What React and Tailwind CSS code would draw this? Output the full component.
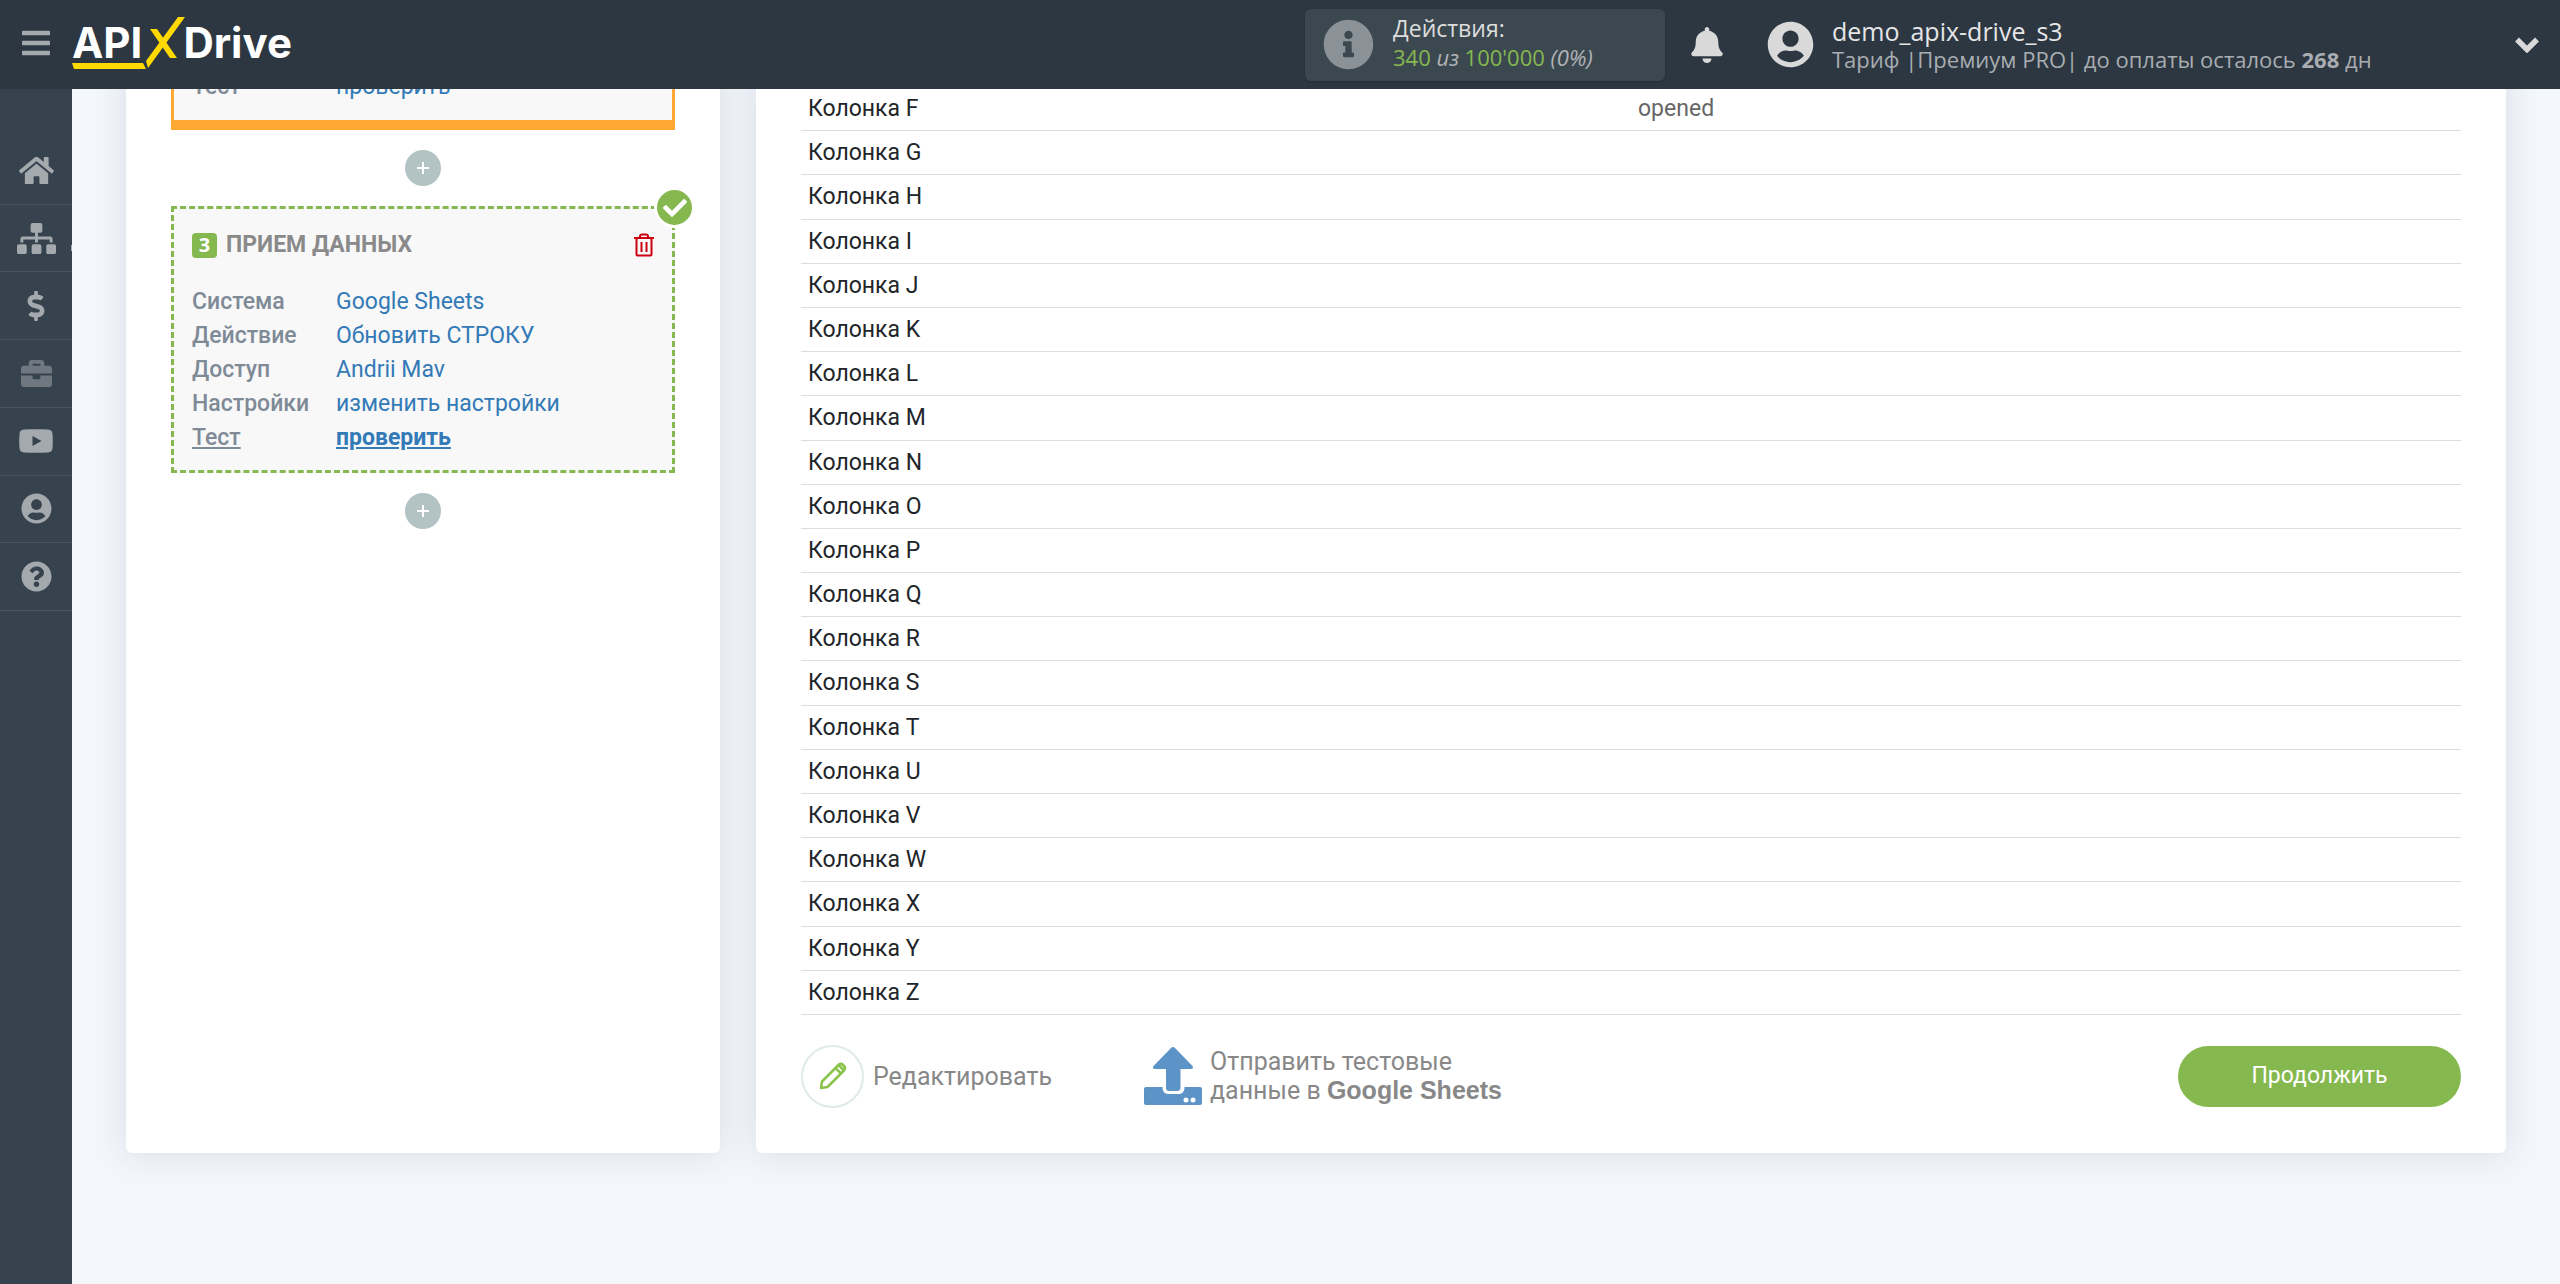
import { useState } from "react";
import {
  FaBars,
  FaBell,
  FaBriefcase,
  FaCheck,
  FaDollarSign,
  FaHome,
  FaInfoCircle,
  FaQuestionCircle,
  FaSitemap,
  FaUserCircle,
} from "react-icons/fa";

const columns = "FGHIJKLMNOPQRSTUVWXYZ".split("");
const values = { F: "opened" };

const YoutubeIcon = () => (
  <svg width="34" height="24" viewBox="0 0 34 24" fill="currentColor">
    <path
      fillRule="evenodd"
      d="M5 .6C13 0 21 0 29 .6c3 .2 4.300 1.600 4.500 4.400.4 5 .4 9 0 14-.2 2.800-1.500 4.200-4.500 4.400-8 .6-16 .6-24 0C2 23.200.700 21.800.5 19c-.4-5-.4-9 0-14C.7 2.200 2 .8 5 .6ZM13.500 7v10l9-5-9-5Z"
    />
  </svg>
);

const TrashIcon = () => (
  <svg width="20" height="24" viewBox="0 0 20 24" fill="none" stroke="currentColor" strokeWidth="2">
    <path d="M0 5h20M6 5V3.500q0-2 2-2h4q2 0 2 2V5M2.500 5v16.500q0 1 1 1h13q1 0 1-1V5M7.500 9v10M12.500 9v10" />
  </svg>
);

const PencilIcon = () => (
  <svg width="28" height="28" viewBox="0 0 28 28" fill="none" stroke="currentColor" strokeWidth="2.500" strokeLinejoin="round">
    <path d="M2 26l1-6.500L19.500 3q1.500-1.500 3.500-1l3 3q.5 2-1 3.500L8.500 25 2 26ZM16.500 6l5.500 5.500M19.500 3l5.500 5.500" />
  </svg>
);

const UploadIcon = () => (
  <svg width="58" height="58" viewBox="0 0 58 58" fill="currentColor">
    <path d="M29 0q1 0 2 1l17.500 18q1.500 3-1.500 3H36.500v18.500q0 3.500-3.500 3.500h-8q-3 0-3-3.500V22H11q-3 0-1.500-3L27 1q1-1 2-1Z" />
    <path d="M2 40h16.500v1.500q1 5.500 6 5.500h10q5 0 6-5.500V40H56q2 0 2 2v14q0 2-2 2H2q-2 0-2-2V42q0-2 2-2Z" />
    <circle cx="42" cy="53" r="2.500" fill="#fff" />
    <circle cx="49" cy="53" r="2.500" fill="#fff" />
  </svg>
);

const menu = [
  { id: "home", label: "Главная", icon: <FaHome size={35} /> },
  { id: "links", label: "Связи", icon: <FaSitemap size={39} /> },
  { id: "billing", label: "Оплата", icon: <FaDollarSign size={30} /> },
  { id: "projects", label: "Проекты", icon: <FaBriefcase size={31} />, dim: true },
  { id: "video", label: "Видео", icon: <YoutubeIcon /> },
  { id: "profile", label: "Профиль", icon: <FaUserCircle size={31} /> },
  { id: "help", label: "Помощь", icon: <FaQuestionCircle size={31} /> },
];

const steps = [
  { label: "Система", value: "Google Sheets" },
  { label: "Действие", value: "Обновить СТРОКУ" },
  { label: "Доступ", value: "Andrii Mav" },
  { label: "Настройки", value: "изменить настройки" },
  { label: "Тест", value: "проверить", active: true },
];

const Logo = () => (
  <a href="#" aria-label="APIXDrive" className="relative flex items-center font-['Inter',sans-serif] text-[42px] leading-[48px] font-bold text-white">
    <span>API</span>
    <svg className="-my-2 -mr-0.5 ml-1" width="39" height="52" viewBox="0 0 39 52" fill="#ffd900">
      <path d="M32 0h7L2 51 0 44Z" />
      <path d="M4 12h7l20 29h-7Z" />
    </svg>
    <span>Drive</span>
    <svg className="absolute top-full left-0 -mt-1" width="74" height="6" viewBox="0 0 74 6" fill="#ffd900">
      <path d="M0 0h71l3 6H2Z" />
    </svg>
  </a>
);

const Header = () => (
  <header className="relative z-10 flex h-[89px] items-center bg-[#2c3742] pr-[21px] font-['Open_Sans',sans-serif] text-[22px]">
    <div className="flex h-full items-center gap-5 pb-1 pl-5">
      <button aria-label="Меню" className="text-[#a3a9ad]">
        <FaBars size={32} />
      </button>
      <Logo />
    </div>
    <div className="ml-auto flex h-[72px] w-[360px] items-center gap-[19px] rounded-md bg-[#3c4850] px-[18px] shadow">
      <FaInfoCircle size={51} className="text-[#8b9297]" />
      <div className="pb-1 leading-[29px] text-[#ddd]">
        <p className="text-[23px]">Действия:</p>
        <p className="text-[#85b84f]">
          340 <i className="text-[#b0b3b6]">из</i> 100'000 <i className="text-[#b0b3b6]">(0%)</i>
        </p>
      </div>
    </div>
    <button aria-label="Уведомления" className="ml-6 text-[#d9d9d9]">
      <FaBell size={36} />
    </button>
    <div className="ml-[42px] flex w-[748px] items-center gap-[18px] text-[#d9d9d9]">
      <FaUserCircle size={47} />
      <div className="leading-[28px]">
        <p className="text-[25px] text-[#e6e6e6]">demo_apix-drive_s3</p>
        <p className="text-[#a9adb1]">
          Тариф |Премиум PRO| до оплаты осталось <b>268</b> дн
        </p>
      </div>
    </div>
    <button aria-label="Открыть меню" className="text-[#d9d9d9]">
      <svg width="24" height="16" viewBox="0 0 24 16" fill="none" stroke="currentColor" strokeWidth="5.500">
        <path d="M2 2.500l10 10 10-10" />
      </svg>
    </button>
  </header>
);

const Sidebar = () => (
  <nav className="w-[72px] shrink-0 bg-[#36424e] pt-12">
    <ul className="grid h-[474px] grid-rows-7">
      {menu.map((item) => (
        <li key={item.id} className="relative border-b border-[#4a5561]">
          <a
            href="#"
            aria-label={item.label}
            className={`flex h-full items-center justify-center ${item.dim ? "text-[#6f7880]" : "text-[#a3a9ad]"}`}
          >
            {item.icon}
          </a>
          {item.id === "links" && <span className="absolute top-[40px] right-0 h-1.5 w-px bg-[#a3a9ad]"></span>}
        </li>
      ))}
    </ul>
  </nav>
);

const AddButton = () => (
  <button
    aria-label="Добавить шаг"
    className="mx-auto my-5 flex size-9 items-center justify-center rounded-full bg-[#b3c3c3] text-white"
  >
    <svg width="12" height="12" viewBox="0 0 12 12" stroke="currentColor" strokeWidth="2">
      <path d="M6 0v12M0 6h12" />
    </svg>
  </button>
);

const StepRow = ({ label, value, active }) => (
  <li className="flex">
    <span className="w-36 font-medium text-[#7f8a97]">
      <span className={active ? "underline" : ""}>{label}</span>
    </span>
    <a href="#" className={active ? "font-bold text-[#337ab7] underline" : "text-[#337ab7]"}>
      {value}
    </a>
  </li>
);

const Steps = () => (
  <aside className="w-[594px] shrink-0 rounded-md bg-white px-[45px] shadow-[0_0_34px_rgba(44,55,66,0.13)]">
    <ul className="border-x-[3px] border-b-[10px] border-[#ffa834] bg-[#f8f8f8] px-[18px] pb-4 leading-[34px]">
      <StepRow label="Тест" value="проверить" />
    </ul>
    <AddButton />
    <section className="relative border-[3px] border-dashed border-[#85b84f] bg-[#f8f8f8] px-[18px] pt-[19px] pb-[15px]">
      <div className="mb-[22px] flex items-center">
        <span className="mr-[9px] flex size-[25px] items-center justify-center rounded bg-[#85b84f] font-['Open_Sans',sans-serif] text-[20px] font-bold text-white">
          3
        </span>
        <h2 className="font-bold text-[#8a8a8a]">ПРИЕМ ДАННЫХ</h2>
        <button aria-label="Удалить" className="ml-auto text-[#cc0011]">
          <TrashIcon />
        </button>
      </div>
      <ul className="leading-[34px]">
        {steps.map((step) => (
          <StepRow key={step.label} {...step} />
        ))}
      </ul>
      <span className="absolute -top-[22px] -right-[23px] flex size-[41px] items-center justify-center rounded-full border-[3px] border-white bg-[#85b84f] text-white">
        <FaCheck size={24} />
      </span>
    </section>
    <AddButton />
  </aside>
);

const Result = () => {
  const [sent, setSent] = useState(false);

  return (
    <section className="flex-1 rounded-md bg-white px-[45px] pt-[17px] pb-11 shadow-[0_0_34px_rgba(44,55,66,0.13)]">
      <table className="w-full table-fixed border-collapse text-left leading-[1.4]">
        <tbody>
          {columns.map((name) => (
            <tr key={name} className="border-b border-[#ddd]">
              <th scope="row" className="px-[7px] pt-1.5 pb-[5px] font-normal text-[#212529]">
                Колонка {name}
              </th>
              <td className="px-[7px] pt-1.5 pb-[5px] text-[#666]">{values[name]}</td>
            </tr>
          ))}
        </tbody>
      </table>
      <div className="mt-[30px] flex items-center text-[25px] text-[#888]">
        <button className="flex w-[343px] items-center gap-[9px]">
          <span className="flex size-[63px] items-center justify-center rounded-full border-2 border-[#e1eaea] text-[#8bc34a]">
            <PencilIcon />
          </span>
          Редактировать
        </button>
        <button onClick={() => setSent(true)} disabled={sent} className="flex items-center gap-2 text-left leading-[29px]">
          <span className="text-[#5d94c7]">
            <UploadIcon />
          </span>
          <span>
            Отправить тестовые
            <br />
            данные в <b className="font-['Liberation_Sans',sans-serif]">Google Sheets</b>
          </span>
        </button>
        <button className="ml-auto h-[61px] w-[283px] rounded-full bg-[#85b84f] text-[23px] text-white">Продолжить</button>
      </div>
    </section>
  );
};

const App = () => (
  <div className="flex min-h-screen flex-col bg-[#f3f6fb] font-['Roboto',sans-serif] text-[23px]">
    <Header />
    <div className="flex flex-1">
      <Sidebar />
      <main className="-mt-[19px] flex flex-1 gap-9 pr-[54px] pb-[131px] pl-[54px]">
        <Steps />
        <Result />
      </main>
    </div>
  </div>
);

export default App;
